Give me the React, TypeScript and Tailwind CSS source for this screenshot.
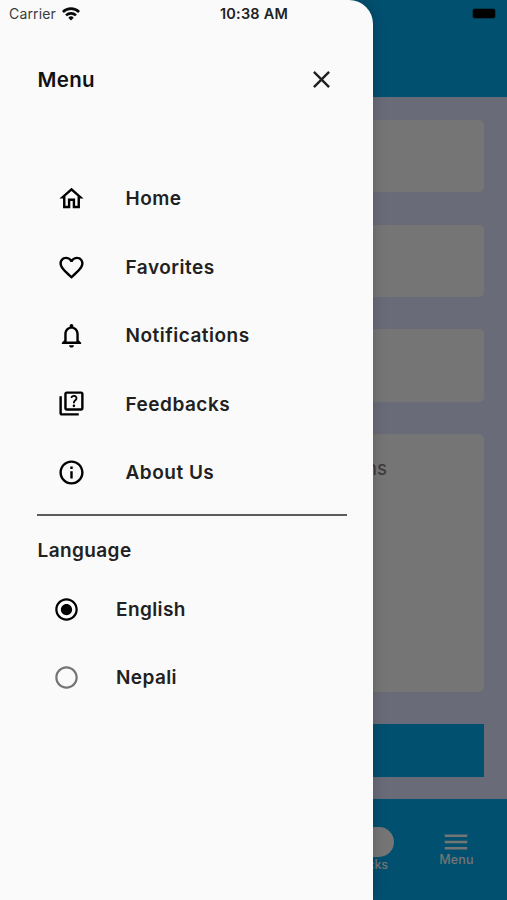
import React, { useState } from 'react';
import {
  MdClose,
  MdFavoriteBorder,
  MdMenu,
  MdOutlineHome,
  MdOutlineInfo,
  MdOutlineNotifications,
  MdOutlineQuiz,
  MdRadioButtonChecked,
  MdRadioButtonUnchecked,
} from 'react-icons/md';

const menuItems = [
  { label: 'Home', icon: MdOutlineHome },
  { label: 'Favorites', icon: MdFavoriteBorder },
  { label: 'Notifications', icon: MdOutlineNotifications },
  { label: 'Feedbacks', icon: MdOutlineQuiz },
  { label: 'About Us', icon: MdOutlineInfo },
];

const languages = ['English', 'Nepali'];

const WifiIcon = () => (
  <svg width="18" height="14" viewBox="0 0 18 14" fill="none" stroke="#0a0a0a" strokeWidth="2.6">
    <path d="M0.9 5a11.5 11.5 0 0 1 16.2 0" />
    <path d="M4 8.4a7.1 7.1 0 0 1 10 0" />
    <path d="M9 13.4L6.3 10.7a3.8 3.8 0 0 1 5.4 0z" fill="#0a0a0a" stroke="none" />
  </svg>
);

const FeedbackPage = () => (
  <div className="flex h-full flex-col bg-[#6a6b78]">
    <header className="flex h-[97px] shrink-0 items-start justify-end bg-[#02506f] pr-[11px] pt-[8px]">
      <div className="h-[11px] w-[24px] rounded-[3px] border border-[#023a50] bg-black" />
    </header>

    <main className="flex flex-1 flex-col pl-[23px] pr-[23px] pt-[23px]">
      <div className="flex flex-col gap-[32.2px]">
        <div className="h-[72.4px] rounded-[5px] bg-[#757575]" />
        <div className="h-[72.4px] rounded-[5px] bg-[#757575]" />
        <div className="h-[72.4px] rounded-[5px] bg-[#757575]" />
        <div className="flex h-[258px] justify-end rounded-[5px] bg-[#757575] pr-[97px] pt-[21px] text-[19px] leading-[28px] text-[#393939]">
          Suggestions
        </div>
        <div className="h-[53.5px] bg-[#02506f]" />
      </div>
    </main>

    <nav className="flex h-[101px] shrink-0 justify-end bg-[#02506f] text-[12.5px] font-medium leading-[15px] text-[#757575]">
      <div className="flex w-[100px] flex-col items-center pt-[28px]">
        <div className="h-[30px] w-[78px] rounded-full bg-[#757575]" />
        <span className="ml-[1px]">Feedbacks</span>
      </div>
      <div className="flex w-[102px] flex-col items-center pt-[28px]">
        <MdMenu size={30} />
        <span className="-mt-[5px] ml-[1px] tracking-[0.2px]">Menu</span>
      </div>
    </nav>
  </div>
);

const Drawer = () => {
  const [language, setLanguage] = useState('English');

  return (
    <aside className="absolute inset-y-0 left-0 w-[372.5px] overflow-hidden rounded-tr-[24px] bg-[#fafafa] text-[#212121] shadow-[0_0_14px_rgba(0,0,0,0.2)]">
      <div className="flex h-[28px] items-center pl-[9px] text-[14px] leading-[28px]">
        <span className="w-[53px] tracking-[0.15px] text-[#3a3a3a]">Carrier</span>
        <WifiIcon />
        <span className="ml-[140px] text-[14.5px] font-semibold tracking-[0.2px]">10:38 AM</span>
      </div>

      <div className="flex items-center justify-between pl-[37.5px] pr-[36.5px] pt-[35.5px]">
        <h1 className="pt-[1px] text-[20.5px] font-semibold leading-[30px] tracking-[0.3px] text-[#111111]">Menu</h1>
        <button type="button" aria-label="Close">
          <MdClose size={29} />
        </button>
      </div>

      <ul className="mt-[70px] text-[19px] font-semibold tracking-[0.5px]">
        {menuItems.map(({ label, icon: Icon }) => (
          <li key={label} className="flex h-[68.4px] items-center pl-[56.5px]">
            <Icon size={29} className="text-black" />
            <span className="ml-[40px] pt-[2px]">{label}</span>
          </li>
        ))}
      </ul>

      <hr className="ml-[37px] mr-[26px] mt-[8px] h-[2px] border-0 bg-[#5c5c5c]" />

      <h2 className="mt-[20px] pl-[37.5px] text-[19px] font-semibold leading-[30px] tracking-[0.4px]">Language</h2>

      <div className="mt-[8.5px] text-[19px] font-semibold tracking-[0.4px]">
        {languages.map((name) => (
          <button
            key={name}
            type="button"
            onClick={() => setLanguage(name)}
            className="flex h-[68.4px] w-full items-center pl-[53px]"
          >
            {language === name ? (
              <MdRadioButtonChecked size={27} className="text-black" />
            ) : (
              <MdRadioButtonUnchecked size={27} className="text-[#757575]" />
            )}
            <span className="ml-[36px] pt-[2px]">{name}</span>
          </button>
        ))}
      </div>
    </aside>
  );
};

const App = () => (
  <div className="relative h-[900px] w-[507px] overflow-hidden font-['Inter',sans-serif]">
    <FeedbackPage />
    <Drawer />
  </div>
);

export default App;
